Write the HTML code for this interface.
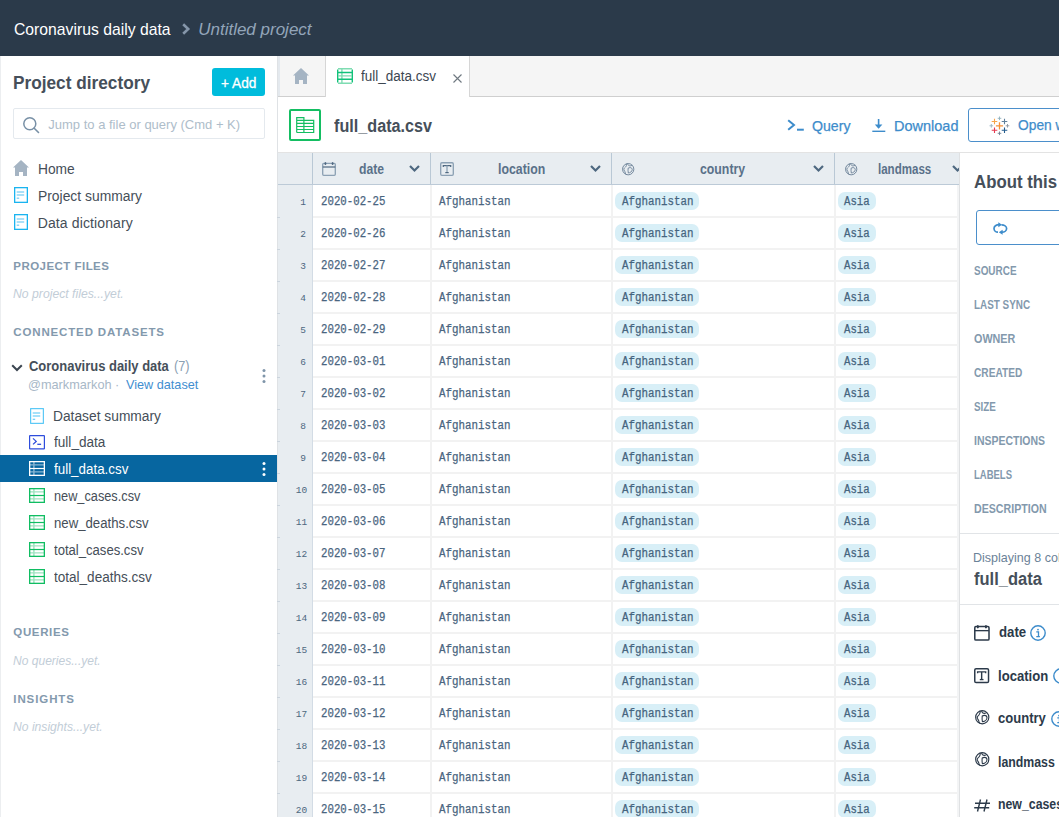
<!DOCTYPE html>
<html><head><meta charset="utf-8">
<style>
*{box-sizing:border-box;margin:0;padding:0}
html,body{width:1059px;height:817px;overflow:hidden;background:#fff;font-family:"Liberation Sans",sans-serif;color:#3f4a55}
.a{position:absolute;white-space:nowrap}
svg.a{overflow:visible}
</style></head><body>
<div class="a" style="left:0;top:0;width:1059px;height:56px;background:#2b3a4a"></div>
<div class="a" style="left:13.6px;top:20px;font-size:17px;color:#fff;transform:scaleX(0.9252);transform-origin:0 0">Coronavirus daily data</div>
<svg class="a" style="left:181px;top:23px" width="10" height="12" viewBox="0 0 10 12"><path d="M2.2 1.2 L7.2 6 L2.2 10.8" fill="none" stroke="#8596aa" stroke-width="2.6"/></svg>
<div class="a" style="left:198.2px;top:20px;font-size:17px;font-style:italic;color:#93a5b9">Untitled project</div>
<div class="a" style="left:0;top:56px;width:278px;height:761px;background:#fff;border-right:1px solid #dfe2e5;border-left:1px solid #eceef0"></div>
<div class="a" style="left:12.6px;top:73px;font-size:18px;font-weight:bold;color:#464f5a;transform:scaleX(0.9575);transform-origin:0 0">Project directory</div>
<div class="a" style="left:212px;top:68px;width:53px;height:28px;background:#00bcdc;border-radius:3px"></div>
<div class="a" style="left:220.9px;top:75px;font-size:14px;color:#fff;-webkit-text-stroke:0.3px currentColor;transform:scaleX(0.9782);transform-origin:0 0">+ Add</div>
<div class="a" style="left:13px;top:108px;width:252px;height:31px;border:1px solid #e4e9ee;border-radius:2px"></div>
<svg class="a" style="left:22px;top:116px" width="18" height="18" viewBox="0 0 18 18"><circle cx="7.8" cy="7.8" r="6" fill="none" stroke="#7890a6" stroke-width="1.5"/><path d="M12.2 12.2 L16.5 16.5" stroke="#7890a6" stroke-width="1.6" stroke-linecap="round"/></svg>
<div class="a" style="left:48.3px;top:117px;font-size:13px;color:#aebdca">Jump to a file or query (Cmd + K)</div>
<svg class="a" style="left:13px;top:160px" width="16" height="16" viewBox="0 0 16 16"><path d="M8 0 L16 7.5 L14 7.5 L14 16 L10 16 L10 12 L6 12 L6 16 L2 16 L2 7.5 L0 7.5 Z" fill="#a5b4c3"/></svg>
<div class="a" style="left:37.7px;top:161px;font-size:14px;color:#454e58;transform:scaleX(0.9847);transform-origin:0 0">Home</div>
<svg class="a" style="left:14px;top:187px" width="14" height="16" viewBox="0 0 14 16"><rect x="0.65" y="0.65" width="12.7" height="14.7" fill="none" stroke="#1ab4f0" stroke-width="1.3"/><path d="M2.7 5h7.5M2.7 8h7.5M2.7 11.2h2.5" stroke="#8ed6f6" stroke-width="1.5"/></svg>
<div class="a" style="left:37.7px;top:188px;font-size:14px;color:#454e58;transform:scaleX(0.9902);transform-origin:0 0">Project summary</div>
<svg class="a" style="left:14px;top:214px" width="14" height="16" viewBox="0 0 14 16"><rect x="0.65" y="0.65" width="12.7" height="14.7" fill="none" stroke="#1ab4f0" stroke-width="1.3"/><path d="M2.7 5h7.5M2.7 8h7.5M2.7 11.2h2.5" stroke="#8ed6f6" stroke-width="1.5"/></svg>
<div class="a" style="left:37.7px;top:215px;font-size:14px;color:#454e58;letter-spacing:0.12px">Data dictionary</div>
<div class="a" style="left:13.3px;top:260px;font-size:11.5px;font-weight:bold;color:#8399ad;letter-spacing:0.46px">PROJECT FILES</div>
<div class="a" style="left:13.3px;top:286px;font-size:13.5px;font-style:italic;color:#c2cdd7;transform:scaleX(0.9050);transform-origin:0 0">No project files...yet.</div>
<div class="a" style="left:13.3px;top:326px;font-size:11.5px;font-weight:bold;color:#8399ad;letter-spacing:0.85px">CONNECTED DATASETS</div>
<svg class="a" style="left:11px;top:364px" width="12" height="8" viewBox="0 0 12 8"><path d="M1.2 1.2 L6 6 L10.8 1.2" fill="none" stroke="#3c4651" stroke-width="2"/></svg>
<div class="a" style="left:29.2px;top:358px;font-size:14px;font-weight:bold;color:#464f5a;transform:scaleX(0.9263);transform-origin:0 0">Coronavirus daily data</div>
<div class="a" style="left:173.5px;top:358px;font-size:14px;color:#8aa0b3;transform:scaleX(0.9120);transform-origin:0 0">(7)</div>
<div class="a" style="left:28.2px;top:377px;font-size:13px;color:#a8b8c7;transform:scaleX(0.9775);transform-origin:0 0">@markmarkoh ·</div>
<div class="a" style="left:125.6px;top:377px;font-size:13px;color:#3f8ed0;transform:scaleX(0.9747);transform-origin:0 0">View dataset</div>
<svg class="a" style="left:261px;top:368px" width="6" height="16" viewBox="0 0 6 16"><circle cx="3" cy="2.5" r="1.5" fill="#7f95a9"/><circle cx="3" cy="8" r="1.5" fill="#7f95a9"/><circle cx="3" cy="13.5" r="1.5" fill="#7f95a9"/></svg>
<svg class="a" style="left:30px;top:407.5px" width="14" height="16" viewBox="0 0 14 16"><rect x="0.65" y="0.65" width="12.7" height="14.7" fill="none" stroke="#4cc4f5" stroke-width="1.1"/><path d="M2.7 5h7.5M2.7 8h7.5M2.7 11.2h2.5" stroke="#4cc4f5" stroke-width="1.1"/></svg>
<div class="a" style="left:53.4px;top:408px;font-size:14px;color:#454e58;transform:scaleX(0.9844);transform-origin:0 0">Dataset summary</div>
<svg class="a" style="left:29px;top:434.5px" width="16" height="14.5" viewBox="0 0 16 14.5"><rect x="0.6" y="0.6" width="14.8" height="13.3" rx="0.5" fill="none" stroke="#2e4ddc" stroke-width="1.2"/><path d="M4 3.4 L7.2 6.4 L4 9.4" fill="none" stroke="#2e4ddc" stroke-width="1.3"/><path d="M8.3 9.3h3.8" stroke="#2e4ddc" stroke-width="1.3"/></svg>
<div class="a" style="left:54.4px;top:434px;font-size:14px;color:#454e58;transform:scaleX(0.9709);transform-origin:0 0">full_data</div>
<div class="a" style="left:0;top:455px;width:277px;height:27px;background:#0766a0"></div>
<svg class="a" style="left:29px;top:461px" width="16" height="15" viewBox="0 0 16 15"><path d="M1 3.9h14M1 10.9h14M4.9 1v13" stroke="#8ab6d2" stroke-width="1.4"/><rect x="0.65" y="0.65" width="14.7" height="13.7" fill="none" stroke="#ffffff" stroke-width="1.3"/><path d="M1 7.5h14" stroke="#ffffff" stroke-width="1.2"/></svg>
<div class="a" style="left:54.4px;top:461px;font-size:14px;color:#fff;transform:scaleX(0.9560);transform-origin:0 0">full_data.csv</div>
<svg class="a" style="left:261px;top:461px" width="6" height="16" viewBox="0 0 6 16"><circle cx="3" cy="2.5" r="1.5" fill="#fff"/><circle cx="3" cy="8" r="1.5" fill="#fff"/><circle cx="3" cy="13.5" r="1.5" fill="#fff"/></svg>
<svg class="a" style="left:29px;top:488.3px" width="16" height="15" viewBox="0 0 16 15"><path d="M1 3.9h14M1 10.9h14M4.9 1v13" stroke="#9fe3c0" stroke-width="1.4"/><rect x="0.65" y="0.65" width="14.7" height="13.7" fill="none" stroke="#10bd62" stroke-width="1.3"/><path d="M1 7.5h14" stroke="#10bd62" stroke-width="1.2"/></svg>
<div class="a" style="left:54.4px;top:488px;font-size:14px;color:#454e58;transform:scaleX(0.9101);transform-origin:0 0">new_cases.csv</div>
<svg class="a" style="left:29px;top:515.2px" width="16" height="15" viewBox="0 0 16 15"><path d="M1 3.9h14M1 10.9h14M4.9 1v13" stroke="#9fe3c0" stroke-width="1.4"/><rect x="0.65" y="0.65" width="14.7" height="13.7" fill="none" stroke="#10bd62" stroke-width="1.3"/><path d="M1 7.5h14" stroke="#10bd62" stroke-width="1.2"/></svg>
<div class="a" style="left:54.4px;top:515px;font-size:14px;color:#454e58;transform:scaleX(0.9423);transform-origin:0 0">new_deaths.csv</div>
<svg class="a" style="left:29px;top:542px" width="16" height="15" viewBox="0 0 16 15"><path d="M1 3.9h14M1 10.9h14M4.9 1v13" stroke="#9fe3c0" stroke-width="1.4"/><rect x="0.65" y="0.65" width="14.7" height="13.7" fill="none" stroke="#10bd62" stroke-width="1.3"/><path d="M1 7.5h14" stroke="#10bd62" stroke-width="1.2"/></svg>
<div class="a" style="left:54.4px;top:542px;font-size:14px;color:#454e58;transform:scaleX(0.9351);transform-origin:0 0">total_cases.csv</div>
<svg class="a" style="left:29px;top:569px" width="16" height="15" viewBox="0 0 16 15"><path d="M1 3.9h14M1 10.9h14M4.9 1v13" stroke="#9fe3c0" stroke-width="1.4"/><rect x="0.65" y="0.65" width="14.7" height="13.7" fill="none" stroke="#10bd62" stroke-width="1.3"/><path d="M1 7.5h14" stroke="#10bd62" stroke-width="1.2"/></svg>
<div class="a" style="left:54.4px;top:569px;font-size:14px;color:#454e58;transform:scaleX(0.9667);transform-origin:0 0">total_deaths.csv</div>
<div class="a" style="left:13.3px;top:626px;font-size:11.5px;font-weight:bold;color:#8399ad;letter-spacing:0.65px">QUERIES</div>
<div class="a" style="left:13.3px;top:653px;font-size:13.5px;font-style:italic;color:#c2cdd7;transform:scaleX(0.8919);transform-origin:0 0">No queries...yet.</div>
<div class="a" style="left:13.3px;top:693px;font-size:11.5px;font-weight:bold;color:#8399ad;letter-spacing:0.91px">INSIGHTS</div>
<div class="a" style="left:13.3px;top:719px;font-size:13.5px;font-style:italic;color:#c2cdd7;transform:scaleX(0.8986);transform-origin:0 0">No insights...yet.</div>
<div class="a" style="left:278px;top:56px;width:781px;height:41px;background:#f5f5f5;border-bottom:1px solid #cfcfcf"></div>
<div class="a" style="left:278px;top:56px;width:2px;height:40px;background:#e4e9ee"></div>
<div class="a" style="left:325px;top:56px;width:145px;height:41px;background:#fff;border-left:1px solid #d6d6d6;border-right:1px solid #d6d6d6"></div>
<svg class="a" style="left:293px;top:68px" width="16" height="16" viewBox="0 0 16 16"><path d="M8 0 L16 7.5 L14 7.5 L14 16 L10 16 L10 12 L6 12 L6 16 L2 16 L2 7.5 L0 7.5 Z" fill="#a5b4c3"/></svg>
<svg class="a" style="left:337px;top:68px" width="16" height="16" viewBox="0 0 16 16"><path d="M0.7 1.5v13M15.3 1.5v13" stroke="#12c27b" stroke-width="1.4"/><path d="M1 0.8h14M1 15.2h14M1 7.9h14M4.9 1v14" stroke="#7fdcb2" stroke-width="1.4"/><path d="M1 4.5h14M1 11.3h14" stroke="#12c27b" stroke-width="1.4"/></svg>
<div class="a" style="left:361.0px;top:68px;font-size:14px;color:#3c4651;transform:scaleX(0.9638);transform-origin:0 0">full_data.csv</div>
<svg class="a" style="left:453px;top:74px" width="9" height="9" viewBox="0 0 9 9"><path d="M0.5 0.5L8.5 8.5M8.5 0.5L0.5 8.5" stroke="#6f7880" stroke-width="1.1"/></svg>
<div class="a" style="left:289px;top:109px;width:32px;height:32px;border:2px solid #14be62;border-radius:2px"></div>
<svg class="a" style="left:296px;top:117px" width="19" height="17" viewBox="0 0 19 17"><path d="M0.7 15.5V0.6H7.9V3.4M0.7 3.4H17.7V15.5H0.7M0.7 6.4H17.7M0.7 9.5H17.7M0.7 12.5H17.7M7.9 3.4V15.5" fill="none" stroke="#14be62" stroke-width="1.2"/></svg>
<div class="a" style="left:333.5px;top:116px;font-size:18px;font-weight:bold;color:#464f5a;transform:scaleX(0.8988);transform-origin:0 0">full_data.csv</div>
<svg class="a" style="left:787px;top:119px" width="18" height="13" viewBox="0 0 18 13"><path d="M1.2 1.2L7 6L1.2 10.8" fill="none" stroke="#3d8ccb" stroke-width="2"/><path d="M10 10.7h6.8" stroke="#3d8ccb" stroke-width="2"/></svg>
<div class="a" style="left:812.3px;top:117px;font-size:15px;color:#3d8ccb;-webkit-text-stroke:0.25px currentColor;transform:scaleX(0.9432);transform-origin:0 0">Query</div>
<svg class="a" style="left:871.5px;top:119px" width="14" height="14" viewBox="0 0 14 14"><path d="M6.6 0v8.5" stroke="#3d8ccb" stroke-width="1.6"/><path d="M2.8 5.5L6.6 9.8L10.4 5.5Z" fill="#3d8ccb"/><path d="M0.3 12.3h13" stroke="#3d8ccb" stroke-width="1.4"/></svg>
<div class="a" style="left:893.6px;top:117px;font-size:15px;color:#3d8ccb;-webkit-text-stroke:0.25px currentColor;transform:scaleX(0.9669);transform-origin:0 0">Download</div>
<div class="a" style="left:968px;top:108px;width:120px;height:34px;border:1.5px solid #4b8fcb;border-radius:3px;background:#fff"></div>
<svg class="a" style="left:988px;top:115px" width="22" height="22" viewBox="988 115 22 22"><path d="M995.9 125.8h7.2M999.5 122.2v7.2" stroke="#f5913a" stroke-width="1.3"/><path d="M991.7 121.5h5.6M994.5 118.7v5.6" stroke="#f7a54a" stroke-width="1.1"/><path d="M1001.7 121.5h5.6M1004.5 118.7v5.6" stroke="#61809c" stroke-width="1.1"/><path d="M991.7 130.3h5.6M994.5 127.50000000000001v5.6" stroke="#e53b50" stroke-width="1.1"/><path d="M1001.7 130.3h5.6M1004.5 127.50000000000001v5.6" stroke="#245d8e" stroke-width="1.1"/><path d="M997.7 118.3h3.6M999.5 116.5v3.6" stroke="#8fb0bb" stroke-width="0.9"/><path d="M997.7 133.3h3.6M999.5 131.5v3.6" stroke="#6d7f91" stroke-width="0.9"/><path d="M989.5 125.8h3.6M991.3 124.0v3.6" stroke="#9ab3c2" stroke-width="0.9"/><path d="M1005.7 125.8h3.6M1007.5 124.0v3.6" stroke="#8d96a0" stroke-width="0.9"/></svg>
<div class="a" style="left:1017.6px;top:116px;font-size:15px;color:#3d8ccb;-webkit-text-stroke:0.25px currentColor;transform:scaleX(0.9188);transform-origin:0 0">Open with</div>
<div class="a" style="left:278px;top:152px;width:781px;height:1px;background:#e3e3e3"></div>
<div class="a" style="left:278px;top:153px;width:681px;height:32px;background:#e8edf1;border-bottom:1px solid #bccad7"></div>
<div class="a" style="left:278px;top:185px;width:35px;height:632px;background:#e8edf1;border-right:1px solid #d3dce5"></div>
<div class="a" style="left:312px;top:153px;width:1px;height:31px;background:#b9c8d5"></div>
<div class="a" style="left:430px;top:153px;width:1px;height:31px;background:#b9c8d5"></div>
<div class="a" style="left:611px;top:153px;width:1px;height:31px;background:#b9c8d5"></div>
<div class="a" style="left:834px;top:153px;width:1px;height:31px;background:#b9c8d5"></div>
<div class="a" style="left:430px;top:185px;width:2px;height:632px;background:#f2f2f2"></div>
<div class="a" style="left:611px;top:185px;width:2px;height:632px;background:#f2f2f2"></div>
<div class="a" style="left:834px;top:185px;width:2px;height:632px;background:#f2f2f2"></div>
<div class="a" style="left:313px;top:216px;width:646px;height:2px;background:#f2f2f2"></div>
<div class="a" style="left:277px;top:217px;width:3px;height:1px;background:#cbd4dd"></div>
<div class="a" style="left:313px;top:248px;width:646px;height:2px;background:#f2f2f2"></div>
<div class="a" style="left:277px;top:249px;width:3px;height:1px;background:#cbd4dd"></div>
<div class="a" style="left:313px;top:280px;width:646px;height:2px;background:#f2f2f2"></div>
<div class="a" style="left:277px;top:281px;width:3px;height:1px;background:#cbd4dd"></div>
<div class="a" style="left:313px;top:312px;width:646px;height:2px;background:#f2f2f2"></div>
<div class="a" style="left:277px;top:313px;width:3px;height:1px;background:#cbd4dd"></div>
<div class="a" style="left:313px;top:344px;width:646px;height:2px;background:#f2f2f2"></div>
<div class="a" style="left:277px;top:345px;width:3px;height:1px;background:#cbd4dd"></div>
<div class="a" style="left:313px;top:376px;width:646px;height:2px;background:#f2f2f2"></div>
<div class="a" style="left:277px;top:377px;width:3px;height:1px;background:#cbd4dd"></div>
<div class="a" style="left:313px;top:408px;width:646px;height:2px;background:#f2f2f2"></div>
<div class="a" style="left:277px;top:409px;width:3px;height:1px;background:#cbd4dd"></div>
<div class="a" style="left:313px;top:440px;width:646px;height:2px;background:#f2f2f2"></div>
<div class="a" style="left:277px;top:441px;width:3px;height:1px;background:#cbd4dd"></div>
<div class="a" style="left:313px;top:472px;width:646px;height:2px;background:#f2f2f2"></div>
<div class="a" style="left:277px;top:473px;width:3px;height:1px;background:#cbd4dd"></div>
<div class="a" style="left:313px;top:504px;width:646px;height:2px;background:#f2f2f2"></div>
<div class="a" style="left:277px;top:505px;width:3px;height:1px;background:#cbd4dd"></div>
<div class="a" style="left:313px;top:536px;width:646px;height:2px;background:#f2f2f2"></div>
<div class="a" style="left:277px;top:537px;width:3px;height:1px;background:#cbd4dd"></div>
<div class="a" style="left:313px;top:568px;width:646px;height:2px;background:#f2f2f2"></div>
<div class="a" style="left:277px;top:569px;width:3px;height:1px;background:#cbd4dd"></div>
<div class="a" style="left:313px;top:600px;width:646px;height:2px;background:#f2f2f2"></div>
<div class="a" style="left:277px;top:601px;width:3px;height:1px;background:#cbd4dd"></div>
<div class="a" style="left:313px;top:632px;width:646px;height:2px;background:#f2f2f2"></div>
<div class="a" style="left:277px;top:633px;width:3px;height:1px;background:#cbd4dd"></div>
<div class="a" style="left:313px;top:664px;width:646px;height:2px;background:#f2f2f2"></div>
<div class="a" style="left:277px;top:665px;width:3px;height:1px;background:#cbd4dd"></div>
<div class="a" style="left:313px;top:696px;width:646px;height:2px;background:#f2f2f2"></div>
<div class="a" style="left:277px;top:697px;width:3px;height:1px;background:#cbd4dd"></div>
<div class="a" style="left:313px;top:728px;width:646px;height:2px;background:#f2f2f2"></div>
<div class="a" style="left:277px;top:729px;width:3px;height:1px;background:#cbd4dd"></div>
<div class="a" style="left:313px;top:760px;width:646px;height:2px;background:#f2f2f2"></div>
<div class="a" style="left:277px;top:761px;width:3px;height:1px;background:#cbd4dd"></div>
<div class="a" style="left:313px;top:792px;width:646px;height:2px;background:#f2f2f2"></div>
<div class="a" style="left:277px;top:793px;width:3px;height:1px;background:#cbd4dd"></div>
<div class="a" style="left:313px;top:824px;width:646px;height:2px;background:#f2f2f2"></div>
<div class="a" style="left:277px;top:825px;width:3px;height:1px;background:#cbd4dd"></div>
<svg class="a" style="left:322px;top:162.2px" width="14" height="14" viewBox="0 0 14 14"><rect x="0.7" y="1.4" width="12.6" height="11.9" rx="1" fill="none" stroke="#8ca1b4" stroke-width="1.35"/><path d="M0.8 5.0h12.4" stroke="#4f6880" stroke-width="1.2"/><ellipse cx="3.4" cy="1.6" rx="0.95" ry="1.5" fill="#4f6880"/><ellipse cx="10.6" cy="1.6" rx="0.95" ry="1.5" fill="#4f6880"/></svg>
<div class="a" style="left:358.8px;top:161px;font-size:14px;font-weight:bold;color:#5a7189;transform:scaleX(0.8690);transform-origin:0 0">date</div>
<svg class="a" style="left:408.5px;top:164.5px" width="11" height="7" viewBox="0 0 11 7"><path d="M1 1L5.5 5.5L10 1" fill="none" stroke="#4e6880" stroke-width="2.2"/></svg>
<svg class="a" style="left:440px;top:162px" width="14" height="14" viewBox="0 0 14 14"><rect x="0.7" y="0.7" width="12.6" height="12.6" rx="1.2" fill="none" stroke="#8ca1b4" stroke-width="1.35"/><path d="M3.3 4.9V3.6H10.7V4.9" fill="none" stroke="#4f6880" stroke-width="1.2"/><path d="M7 3.6V10.4" stroke="#8ca1b4" stroke-width="1.3"/><path d="M5.3 10.6H8.7" stroke="#4f6880" stroke-width="1.2"/></svg>
<div class="a" style="left:497.7px;top:161px;font-size:14px;font-weight:bold;color:#5a7189;transform:scaleX(0.8792);transform-origin:0 0">location</div>
<svg class="a" style="left:589.5px;top:164.5px" width="11" height="7" viewBox="0 0 11 7"><path d="M1 1L5.5 5.5L10 1" fill="none" stroke="#4e6880" stroke-width="2.2"/></svg>
<svg class="a" style="left:622px;top:163px" width="12.4" height="12.4" viewBox="0 0 14.5 14.5"><circle cx="7.25" cy="7.25" r="6.6" fill="none" stroke="#5f778e" stroke-width="1.0"/><path d="M5.2 1.0C5.4 2.6 5.2 3.6 4.0 4.8C2.6 6 1.9 7 2.3 8.2C2.8 9.4 3.8 10 3.9 11.6C3.9 12.4 4.4 13 4.8 13.3M6.6 0.8C7 2.6 8 3.4 9.5 3.4C10.5 3.4 11.2 3.1 11.9 2.4M7.2 6C7 8 7 10 7.4 11.7C9.5 11.6 11.8 10 12 7.8C12 6.4 11 5.4 9.6 5.4C8.6 5.4 7.8 5.6 7.2 6Z" fill="none" stroke="#5f778e" stroke-width="0.95" stroke-linejoin="round"/></svg>
<div class="a" style="left:700.2px;top:161px;font-size:14px;font-weight:bold;color:#5a7189;transform:scaleX(0.8787);transform-origin:0 0">country</div>
<svg class="a" style="left:812.5px;top:164.5px" width="11" height="7" viewBox="0 0 11 7"><path d="M1 1L5.5 5.5L10 1" fill="none" stroke="#4e6880" stroke-width="2.2"/></svg>
<svg class="a" style="left:844.8px;top:163px" width="12.4" height="12.4" viewBox="0 0 14.5 14.5"><circle cx="7.25" cy="7.25" r="6.6" fill="none" stroke="#5f778e" stroke-width="1.0"/><path d="M5.2 1.0C5.4 2.6 5.2 3.6 4.0 4.8C2.6 6 1.9 7 2.3 8.2C2.8 9.4 3.8 10 3.9 11.6C3.9 12.4 4.4 13 4.8 13.3M6.6 0.8C7 2.6 8 3.4 9.5 3.4C10.5 3.4 11.2 3.1 11.9 2.4M7.2 6C7 8 7 10 7.4 11.7C9.5 11.6 11.8 10 12 7.8C12 6.4 11 5.4 9.6 5.4C8.6 5.4 7.8 5.6 7.2 6Z" fill="none" stroke="#5f778e" stroke-width="0.95" stroke-linejoin="round"/></svg>
<div class="a" style="left:877.6px;top:161px;font-size:14px;font-weight:bold;color:#5a7189;transform:scaleX(0.8241);transform-origin:0 0">landmass</div>
<svg class="a" style="left:951.5px;top:164.5px" width="11" height="7" viewBox="0 0 11 7"><path d="M1 1L5.5 5.5L10 1" fill="none" stroke="#4e6880" stroke-width="2.2"/></svg>
<div class="a" style="left:300.3px;top:197px;font-family:'Liberation Mono',monospace;font-size:9.5px;color:#4d6780">1</div>
<div class="a" style="left:321.3px;top:195px;font-family:'Liberation Mono',monospace;font-size:12px;color:#4a6580;-webkit-text-stroke:0.25px currentColor;transform:scaleX(0.8940);transform-origin:0 0">2020-02-25</div>
<div class="a" style="left:439.2px;top:195px;font-family:'Liberation Mono',monospace;font-size:12px;color:#4a6580;-webkit-text-stroke:0.25px currentColor;transform:scaleX(0.9011);transform-origin:0 0">Afghanistan</div>
<div class="a" style="left:615px;top:192px;width:84px;height:18px;border-radius:7px;background:#d8eff7"></div>
<div class="a" style="left:622.2px;top:195px;font-family:'Liberation Mono',monospace;font-size:12px;color:#45647e;-webkit-text-stroke:0.25px currentColor;transform:scaleX(0.9011);transform-origin:0 0">Afghanistan</div>
<div class="a" style="left:838px;top:192px;width:38px;height:18px;border-radius:7px;background:#d8eff7"></div>
<div class="a" style="left:844.3px;top:195px;font-family:'Liberation Mono',monospace;font-size:12px;color:#45647e;-webkit-text-stroke:0.25px currentColor;transform:scaleX(0.8915);transform-origin:0 0">Asia</div>
<div class="a" style="left:300.3px;top:229px;font-family:'Liberation Mono',monospace;font-size:9.5px;color:#4d6780">2</div>
<div class="a" style="left:321.3px;top:227px;font-family:'Liberation Mono',monospace;font-size:12px;color:#4a6580;-webkit-text-stroke:0.25px currentColor;transform:scaleX(0.8940);transform-origin:0 0">2020-02-26</div>
<div class="a" style="left:439.2px;top:227px;font-family:'Liberation Mono',monospace;font-size:12px;color:#4a6580;-webkit-text-stroke:0.25px currentColor;transform:scaleX(0.9011);transform-origin:0 0">Afghanistan</div>
<div class="a" style="left:615px;top:224px;width:84px;height:18px;border-radius:7px;background:#d8eff7"></div>
<div class="a" style="left:622.2px;top:227px;font-family:'Liberation Mono',monospace;font-size:12px;color:#45647e;-webkit-text-stroke:0.25px currentColor;transform:scaleX(0.9011);transform-origin:0 0">Afghanistan</div>
<div class="a" style="left:838px;top:224px;width:38px;height:18px;border-radius:7px;background:#d8eff7"></div>
<div class="a" style="left:844.3px;top:227px;font-family:'Liberation Mono',monospace;font-size:12px;color:#45647e;-webkit-text-stroke:0.25px currentColor;transform:scaleX(0.8915);transform-origin:0 0">Asia</div>
<div class="a" style="left:300.3px;top:261px;font-family:'Liberation Mono',monospace;font-size:9.5px;color:#4d6780">3</div>
<div class="a" style="left:321.3px;top:259px;font-family:'Liberation Mono',monospace;font-size:12px;color:#4a6580;-webkit-text-stroke:0.25px currentColor;transform:scaleX(0.8940);transform-origin:0 0">2020-02-27</div>
<div class="a" style="left:439.2px;top:259px;font-family:'Liberation Mono',monospace;font-size:12px;color:#4a6580;-webkit-text-stroke:0.25px currentColor;transform:scaleX(0.9011);transform-origin:0 0">Afghanistan</div>
<div class="a" style="left:615px;top:256px;width:84px;height:18px;border-radius:7px;background:#d8eff7"></div>
<div class="a" style="left:622.2px;top:259px;font-family:'Liberation Mono',monospace;font-size:12px;color:#45647e;-webkit-text-stroke:0.25px currentColor;transform:scaleX(0.9011);transform-origin:0 0">Afghanistan</div>
<div class="a" style="left:838px;top:256px;width:38px;height:18px;border-radius:7px;background:#d8eff7"></div>
<div class="a" style="left:844.3px;top:259px;font-family:'Liberation Mono',monospace;font-size:12px;color:#45647e;-webkit-text-stroke:0.25px currentColor;transform:scaleX(0.8915);transform-origin:0 0">Asia</div>
<div class="a" style="left:300.3px;top:293px;font-family:'Liberation Mono',monospace;font-size:9.5px;color:#4d6780">4</div>
<div class="a" style="left:321.3px;top:291px;font-family:'Liberation Mono',monospace;font-size:12px;color:#4a6580;-webkit-text-stroke:0.25px currentColor;transform:scaleX(0.8940);transform-origin:0 0">2020-02-28</div>
<div class="a" style="left:439.2px;top:291px;font-family:'Liberation Mono',monospace;font-size:12px;color:#4a6580;-webkit-text-stroke:0.25px currentColor;transform:scaleX(0.9011);transform-origin:0 0">Afghanistan</div>
<div class="a" style="left:615px;top:288px;width:84px;height:18px;border-radius:7px;background:#d8eff7"></div>
<div class="a" style="left:622.2px;top:291px;font-family:'Liberation Mono',monospace;font-size:12px;color:#45647e;-webkit-text-stroke:0.25px currentColor;transform:scaleX(0.9011);transform-origin:0 0">Afghanistan</div>
<div class="a" style="left:838px;top:288px;width:38px;height:18px;border-radius:7px;background:#d8eff7"></div>
<div class="a" style="left:844.3px;top:291px;font-family:'Liberation Mono',monospace;font-size:12px;color:#45647e;-webkit-text-stroke:0.25px currentColor;transform:scaleX(0.8915);transform-origin:0 0">Asia</div>
<div class="a" style="left:300.3px;top:325px;font-family:'Liberation Mono',monospace;font-size:9.5px;color:#4d6780">5</div>
<div class="a" style="left:321.3px;top:323px;font-family:'Liberation Mono',monospace;font-size:12px;color:#4a6580;-webkit-text-stroke:0.25px currentColor;transform:scaleX(0.8940);transform-origin:0 0">2020-02-29</div>
<div class="a" style="left:439.2px;top:323px;font-family:'Liberation Mono',monospace;font-size:12px;color:#4a6580;-webkit-text-stroke:0.25px currentColor;transform:scaleX(0.9011);transform-origin:0 0">Afghanistan</div>
<div class="a" style="left:615px;top:320px;width:84px;height:18px;border-radius:7px;background:#d8eff7"></div>
<div class="a" style="left:622.2px;top:323px;font-family:'Liberation Mono',monospace;font-size:12px;color:#45647e;-webkit-text-stroke:0.25px currentColor;transform:scaleX(0.9011);transform-origin:0 0">Afghanistan</div>
<div class="a" style="left:838px;top:320px;width:38px;height:18px;border-radius:7px;background:#d8eff7"></div>
<div class="a" style="left:844.3px;top:323px;font-family:'Liberation Mono',monospace;font-size:12px;color:#45647e;-webkit-text-stroke:0.25px currentColor;transform:scaleX(0.8915);transform-origin:0 0">Asia</div>
<div class="a" style="left:300.3px;top:357px;font-family:'Liberation Mono',monospace;font-size:9.5px;color:#4d6780">6</div>
<div class="a" style="left:321.3px;top:355px;font-family:'Liberation Mono',monospace;font-size:12px;color:#4a6580;-webkit-text-stroke:0.25px currentColor;transform:scaleX(0.8940);transform-origin:0 0">2020-03-01</div>
<div class="a" style="left:439.2px;top:355px;font-family:'Liberation Mono',monospace;font-size:12px;color:#4a6580;-webkit-text-stroke:0.25px currentColor;transform:scaleX(0.9011);transform-origin:0 0">Afghanistan</div>
<div class="a" style="left:615px;top:352px;width:84px;height:18px;border-radius:7px;background:#d8eff7"></div>
<div class="a" style="left:622.2px;top:355px;font-family:'Liberation Mono',monospace;font-size:12px;color:#45647e;-webkit-text-stroke:0.25px currentColor;transform:scaleX(0.9011);transform-origin:0 0">Afghanistan</div>
<div class="a" style="left:838px;top:352px;width:38px;height:18px;border-radius:7px;background:#d8eff7"></div>
<div class="a" style="left:844.3px;top:355px;font-family:'Liberation Mono',monospace;font-size:12px;color:#45647e;-webkit-text-stroke:0.25px currentColor;transform:scaleX(0.8915);transform-origin:0 0">Asia</div>
<div class="a" style="left:300.3px;top:389px;font-family:'Liberation Mono',monospace;font-size:9.5px;color:#4d6780">7</div>
<div class="a" style="left:321.3px;top:387px;font-family:'Liberation Mono',monospace;font-size:12px;color:#4a6580;-webkit-text-stroke:0.25px currentColor;transform:scaleX(0.8940);transform-origin:0 0">2020-03-02</div>
<div class="a" style="left:439.2px;top:387px;font-family:'Liberation Mono',monospace;font-size:12px;color:#4a6580;-webkit-text-stroke:0.25px currentColor;transform:scaleX(0.9011);transform-origin:0 0">Afghanistan</div>
<div class="a" style="left:615px;top:384px;width:84px;height:18px;border-radius:7px;background:#d8eff7"></div>
<div class="a" style="left:622.2px;top:387px;font-family:'Liberation Mono',monospace;font-size:12px;color:#45647e;-webkit-text-stroke:0.25px currentColor;transform:scaleX(0.9011);transform-origin:0 0">Afghanistan</div>
<div class="a" style="left:838px;top:384px;width:38px;height:18px;border-radius:7px;background:#d8eff7"></div>
<div class="a" style="left:844.3px;top:387px;font-family:'Liberation Mono',monospace;font-size:12px;color:#45647e;-webkit-text-stroke:0.25px currentColor;transform:scaleX(0.8915);transform-origin:0 0">Asia</div>
<div class="a" style="left:300.3px;top:421px;font-family:'Liberation Mono',monospace;font-size:9.5px;color:#4d6780">8</div>
<div class="a" style="left:321.3px;top:419px;font-family:'Liberation Mono',monospace;font-size:12px;color:#4a6580;-webkit-text-stroke:0.25px currentColor;transform:scaleX(0.8940);transform-origin:0 0">2020-03-03</div>
<div class="a" style="left:439.2px;top:419px;font-family:'Liberation Mono',monospace;font-size:12px;color:#4a6580;-webkit-text-stroke:0.25px currentColor;transform:scaleX(0.9011);transform-origin:0 0">Afghanistan</div>
<div class="a" style="left:615px;top:416px;width:84px;height:18px;border-radius:7px;background:#d8eff7"></div>
<div class="a" style="left:622.2px;top:419px;font-family:'Liberation Mono',monospace;font-size:12px;color:#45647e;-webkit-text-stroke:0.25px currentColor;transform:scaleX(0.9011);transform-origin:0 0">Afghanistan</div>
<div class="a" style="left:838px;top:416px;width:38px;height:18px;border-radius:7px;background:#d8eff7"></div>
<div class="a" style="left:844.3px;top:419px;font-family:'Liberation Mono',monospace;font-size:12px;color:#45647e;-webkit-text-stroke:0.25px currentColor;transform:scaleX(0.8915);transform-origin:0 0">Asia</div>
<div class="a" style="left:300.3px;top:453px;font-family:'Liberation Mono',monospace;font-size:9.5px;color:#4d6780">9</div>
<div class="a" style="left:321.3px;top:451px;font-family:'Liberation Mono',monospace;font-size:12px;color:#4a6580;-webkit-text-stroke:0.25px currentColor;transform:scaleX(0.8940);transform-origin:0 0">2020-03-04</div>
<div class="a" style="left:439.2px;top:451px;font-family:'Liberation Mono',monospace;font-size:12px;color:#4a6580;-webkit-text-stroke:0.25px currentColor;transform:scaleX(0.9011);transform-origin:0 0">Afghanistan</div>
<div class="a" style="left:615px;top:448px;width:84px;height:18px;border-radius:7px;background:#d8eff7"></div>
<div class="a" style="left:622.2px;top:451px;font-family:'Liberation Mono',monospace;font-size:12px;color:#45647e;-webkit-text-stroke:0.25px currentColor;transform:scaleX(0.9011);transform-origin:0 0">Afghanistan</div>
<div class="a" style="left:838px;top:448px;width:38px;height:18px;border-radius:7px;background:#d8eff7"></div>
<div class="a" style="left:844.3px;top:451px;font-family:'Liberation Mono',monospace;font-size:12px;color:#45647e;-webkit-text-stroke:0.25px currentColor;transform:scaleX(0.8915);transform-origin:0 0">Asia</div>
<div class="a" style="left:295.7px;top:485px;font-family:'Liberation Mono',monospace;font-size:9.5px;color:#4d6780">10</div>
<div class="a" style="left:321.3px;top:483px;font-family:'Liberation Mono',monospace;font-size:12px;color:#4a6580;-webkit-text-stroke:0.25px currentColor;transform:scaleX(0.8940);transform-origin:0 0">2020-03-05</div>
<div class="a" style="left:439.2px;top:483px;font-family:'Liberation Mono',monospace;font-size:12px;color:#4a6580;-webkit-text-stroke:0.25px currentColor;transform:scaleX(0.9011);transform-origin:0 0">Afghanistan</div>
<div class="a" style="left:615px;top:480px;width:84px;height:18px;border-radius:7px;background:#d8eff7"></div>
<div class="a" style="left:622.2px;top:483px;font-family:'Liberation Mono',monospace;font-size:12px;color:#45647e;-webkit-text-stroke:0.25px currentColor;transform:scaleX(0.9011);transform-origin:0 0">Afghanistan</div>
<div class="a" style="left:838px;top:480px;width:38px;height:18px;border-radius:7px;background:#d8eff7"></div>
<div class="a" style="left:844.3px;top:483px;font-family:'Liberation Mono',monospace;font-size:12px;color:#45647e;-webkit-text-stroke:0.25px currentColor;transform:scaleX(0.8915);transform-origin:0 0">Asia</div>
<div class="a" style="left:295.7px;top:517px;font-family:'Liberation Mono',monospace;font-size:9.5px;color:#4d6780">11</div>
<div class="a" style="left:321.3px;top:515px;font-family:'Liberation Mono',monospace;font-size:12px;color:#4a6580;-webkit-text-stroke:0.25px currentColor;transform:scaleX(0.8940);transform-origin:0 0">2020-03-06</div>
<div class="a" style="left:439.2px;top:515px;font-family:'Liberation Mono',monospace;font-size:12px;color:#4a6580;-webkit-text-stroke:0.25px currentColor;transform:scaleX(0.9011);transform-origin:0 0">Afghanistan</div>
<div class="a" style="left:615px;top:512px;width:84px;height:18px;border-radius:7px;background:#d8eff7"></div>
<div class="a" style="left:622.2px;top:515px;font-family:'Liberation Mono',monospace;font-size:12px;color:#45647e;-webkit-text-stroke:0.25px currentColor;transform:scaleX(0.9011);transform-origin:0 0">Afghanistan</div>
<div class="a" style="left:838px;top:512px;width:38px;height:18px;border-radius:7px;background:#d8eff7"></div>
<div class="a" style="left:844.3px;top:515px;font-family:'Liberation Mono',monospace;font-size:12px;color:#45647e;-webkit-text-stroke:0.25px currentColor;transform:scaleX(0.8915);transform-origin:0 0">Asia</div>
<div class="a" style="left:295.7px;top:549px;font-family:'Liberation Mono',monospace;font-size:9.5px;color:#4d6780">12</div>
<div class="a" style="left:321.3px;top:547px;font-family:'Liberation Mono',monospace;font-size:12px;color:#4a6580;-webkit-text-stroke:0.25px currentColor;transform:scaleX(0.8940);transform-origin:0 0">2020-03-07</div>
<div class="a" style="left:439.2px;top:547px;font-family:'Liberation Mono',monospace;font-size:12px;color:#4a6580;-webkit-text-stroke:0.25px currentColor;transform:scaleX(0.9011);transform-origin:0 0">Afghanistan</div>
<div class="a" style="left:615px;top:544px;width:84px;height:18px;border-radius:7px;background:#d8eff7"></div>
<div class="a" style="left:622.2px;top:547px;font-family:'Liberation Mono',monospace;font-size:12px;color:#45647e;-webkit-text-stroke:0.25px currentColor;transform:scaleX(0.9011);transform-origin:0 0">Afghanistan</div>
<div class="a" style="left:838px;top:544px;width:38px;height:18px;border-radius:7px;background:#d8eff7"></div>
<div class="a" style="left:844.3px;top:547px;font-family:'Liberation Mono',monospace;font-size:12px;color:#45647e;-webkit-text-stroke:0.25px currentColor;transform:scaleX(0.8915);transform-origin:0 0">Asia</div>
<div class="a" style="left:295.7px;top:581px;font-family:'Liberation Mono',monospace;font-size:9.5px;color:#4d6780">13</div>
<div class="a" style="left:321.3px;top:579px;font-family:'Liberation Mono',monospace;font-size:12px;color:#4a6580;-webkit-text-stroke:0.25px currentColor;transform:scaleX(0.8940);transform-origin:0 0">2020-03-08</div>
<div class="a" style="left:439.2px;top:579px;font-family:'Liberation Mono',monospace;font-size:12px;color:#4a6580;-webkit-text-stroke:0.25px currentColor;transform:scaleX(0.9011);transform-origin:0 0">Afghanistan</div>
<div class="a" style="left:615px;top:576px;width:84px;height:18px;border-radius:7px;background:#d8eff7"></div>
<div class="a" style="left:622.2px;top:579px;font-family:'Liberation Mono',monospace;font-size:12px;color:#45647e;-webkit-text-stroke:0.25px currentColor;transform:scaleX(0.9011);transform-origin:0 0">Afghanistan</div>
<div class="a" style="left:838px;top:576px;width:38px;height:18px;border-radius:7px;background:#d8eff7"></div>
<div class="a" style="left:844.3px;top:579px;font-family:'Liberation Mono',monospace;font-size:12px;color:#45647e;-webkit-text-stroke:0.25px currentColor;transform:scaleX(0.8915);transform-origin:0 0">Asia</div>
<div class="a" style="left:295.7px;top:613px;font-family:'Liberation Mono',monospace;font-size:9.5px;color:#4d6780">14</div>
<div class="a" style="left:321.3px;top:611px;font-family:'Liberation Mono',monospace;font-size:12px;color:#4a6580;-webkit-text-stroke:0.25px currentColor;transform:scaleX(0.8940);transform-origin:0 0">2020-03-09</div>
<div class="a" style="left:439.2px;top:611px;font-family:'Liberation Mono',monospace;font-size:12px;color:#4a6580;-webkit-text-stroke:0.25px currentColor;transform:scaleX(0.9011);transform-origin:0 0">Afghanistan</div>
<div class="a" style="left:615px;top:608px;width:84px;height:18px;border-radius:7px;background:#d8eff7"></div>
<div class="a" style="left:622.2px;top:611px;font-family:'Liberation Mono',monospace;font-size:12px;color:#45647e;-webkit-text-stroke:0.25px currentColor;transform:scaleX(0.9011);transform-origin:0 0">Afghanistan</div>
<div class="a" style="left:838px;top:608px;width:38px;height:18px;border-radius:7px;background:#d8eff7"></div>
<div class="a" style="left:844.3px;top:611px;font-family:'Liberation Mono',monospace;font-size:12px;color:#45647e;-webkit-text-stroke:0.25px currentColor;transform:scaleX(0.8915);transform-origin:0 0">Asia</div>
<div class="a" style="left:295.7px;top:645px;font-family:'Liberation Mono',monospace;font-size:9.5px;color:#4d6780">15</div>
<div class="a" style="left:321.3px;top:643px;font-family:'Liberation Mono',monospace;font-size:12px;color:#4a6580;-webkit-text-stroke:0.25px currentColor;transform:scaleX(0.8940);transform-origin:0 0">2020-03-10</div>
<div class="a" style="left:439.2px;top:643px;font-family:'Liberation Mono',monospace;font-size:12px;color:#4a6580;-webkit-text-stroke:0.25px currentColor;transform:scaleX(0.9011);transform-origin:0 0">Afghanistan</div>
<div class="a" style="left:615px;top:640px;width:84px;height:18px;border-radius:7px;background:#d8eff7"></div>
<div class="a" style="left:622.2px;top:643px;font-family:'Liberation Mono',monospace;font-size:12px;color:#45647e;-webkit-text-stroke:0.25px currentColor;transform:scaleX(0.9011);transform-origin:0 0">Afghanistan</div>
<div class="a" style="left:838px;top:640px;width:38px;height:18px;border-radius:7px;background:#d8eff7"></div>
<div class="a" style="left:844.3px;top:643px;font-family:'Liberation Mono',monospace;font-size:12px;color:#45647e;-webkit-text-stroke:0.25px currentColor;transform:scaleX(0.8915);transform-origin:0 0">Asia</div>
<div class="a" style="left:295.7px;top:677px;font-family:'Liberation Mono',monospace;font-size:9.5px;color:#4d6780">16</div>
<div class="a" style="left:321.3px;top:675px;font-family:'Liberation Mono',monospace;font-size:12px;color:#4a6580;-webkit-text-stroke:0.25px currentColor;transform:scaleX(0.8940);transform-origin:0 0">2020-03-11</div>
<div class="a" style="left:439.2px;top:675px;font-family:'Liberation Mono',monospace;font-size:12px;color:#4a6580;-webkit-text-stroke:0.25px currentColor;transform:scaleX(0.9011);transform-origin:0 0">Afghanistan</div>
<div class="a" style="left:615px;top:672px;width:84px;height:18px;border-radius:7px;background:#d8eff7"></div>
<div class="a" style="left:622.2px;top:675px;font-family:'Liberation Mono',monospace;font-size:12px;color:#45647e;-webkit-text-stroke:0.25px currentColor;transform:scaleX(0.9011);transform-origin:0 0">Afghanistan</div>
<div class="a" style="left:838px;top:672px;width:38px;height:18px;border-radius:7px;background:#d8eff7"></div>
<div class="a" style="left:844.3px;top:675px;font-family:'Liberation Mono',monospace;font-size:12px;color:#45647e;-webkit-text-stroke:0.25px currentColor;transform:scaleX(0.8915);transform-origin:0 0">Asia</div>
<div class="a" style="left:295.7px;top:709px;font-family:'Liberation Mono',monospace;font-size:9.5px;color:#4d6780">17</div>
<div class="a" style="left:321.3px;top:707px;font-family:'Liberation Mono',monospace;font-size:12px;color:#4a6580;-webkit-text-stroke:0.25px currentColor;transform:scaleX(0.8940);transform-origin:0 0">2020-03-12</div>
<div class="a" style="left:439.2px;top:707px;font-family:'Liberation Mono',monospace;font-size:12px;color:#4a6580;-webkit-text-stroke:0.25px currentColor;transform:scaleX(0.9011);transform-origin:0 0">Afghanistan</div>
<div class="a" style="left:615px;top:704px;width:84px;height:18px;border-radius:7px;background:#d8eff7"></div>
<div class="a" style="left:622.2px;top:707px;font-family:'Liberation Mono',monospace;font-size:12px;color:#45647e;-webkit-text-stroke:0.25px currentColor;transform:scaleX(0.9011);transform-origin:0 0">Afghanistan</div>
<div class="a" style="left:838px;top:704px;width:38px;height:18px;border-radius:7px;background:#d8eff7"></div>
<div class="a" style="left:844.3px;top:707px;font-family:'Liberation Mono',monospace;font-size:12px;color:#45647e;-webkit-text-stroke:0.25px currentColor;transform:scaleX(0.8915);transform-origin:0 0">Asia</div>
<div class="a" style="left:295.7px;top:741px;font-family:'Liberation Mono',monospace;font-size:9.5px;color:#4d6780">18</div>
<div class="a" style="left:321.3px;top:739px;font-family:'Liberation Mono',monospace;font-size:12px;color:#4a6580;-webkit-text-stroke:0.25px currentColor;transform:scaleX(0.8940);transform-origin:0 0">2020-03-13</div>
<div class="a" style="left:439.2px;top:739px;font-family:'Liberation Mono',monospace;font-size:12px;color:#4a6580;-webkit-text-stroke:0.25px currentColor;transform:scaleX(0.9011);transform-origin:0 0">Afghanistan</div>
<div class="a" style="left:615px;top:736px;width:84px;height:18px;border-radius:7px;background:#d8eff7"></div>
<div class="a" style="left:622.2px;top:739px;font-family:'Liberation Mono',monospace;font-size:12px;color:#45647e;-webkit-text-stroke:0.25px currentColor;transform:scaleX(0.9011);transform-origin:0 0">Afghanistan</div>
<div class="a" style="left:838px;top:736px;width:38px;height:18px;border-radius:7px;background:#d8eff7"></div>
<div class="a" style="left:844.3px;top:739px;font-family:'Liberation Mono',monospace;font-size:12px;color:#45647e;-webkit-text-stroke:0.25px currentColor;transform:scaleX(0.8915);transform-origin:0 0">Asia</div>
<div class="a" style="left:295.7px;top:773px;font-family:'Liberation Mono',monospace;font-size:9.5px;color:#4d6780">19</div>
<div class="a" style="left:321.3px;top:771px;font-family:'Liberation Mono',monospace;font-size:12px;color:#4a6580;-webkit-text-stroke:0.25px currentColor;transform:scaleX(0.8940);transform-origin:0 0">2020-03-14</div>
<div class="a" style="left:439.2px;top:771px;font-family:'Liberation Mono',monospace;font-size:12px;color:#4a6580;-webkit-text-stroke:0.25px currentColor;transform:scaleX(0.9011);transform-origin:0 0">Afghanistan</div>
<div class="a" style="left:615px;top:768px;width:84px;height:18px;border-radius:7px;background:#d8eff7"></div>
<div class="a" style="left:622.2px;top:771px;font-family:'Liberation Mono',monospace;font-size:12px;color:#45647e;-webkit-text-stroke:0.25px currentColor;transform:scaleX(0.9011);transform-origin:0 0">Afghanistan</div>
<div class="a" style="left:838px;top:768px;width:38px;height:18px;border-radius:7px;background:#d8eff7"></div>
<div class="a" style="left:844.3px;top:771px;font-family:'Liberation Mono',monospace;font-size:12px;color:#45647e;-webkit-text-stroke:0.25px currentColor;transform:scaleX(0.8915);transform-origin:0 0">Asia</div>
<div class="a" style="left:295.7px;top:805px;font-family:'Liberation Mono',monospace;font-size:9.5px;color:#4d6780">20</div>
<div class="a" style="left:321.3px;top:803px;font-family:'Liberation Mono',monospace;font-size:12px;color:#4a6580;-webkit-text-stroke:0.25px currentColor;transform:scaleX(0.8940);transform-origin:0 0">2020-03-15</div>
<div class="a" style="left:439.2px;top:803px;font-family:'Liberation Mono',monospace;font-size:12px;color:#4a6580;-webkit-text-stroke:0.25px currentColor;transform:scaleX(0.9011);transform-origin:0 0">Afghanistan</div>
<div class="a" style="left:615px;top:800px;width:84px;height:18px;border-radius:7px;background:#d8eff7"></div>
<div class="a" style="left:622.2px;top:803px;font-family:'Liberation Mono',monospace;font-size:12px;color:#45647e;-webkit-text-stroke:0.25px currentColor;transform:scaleX(0.9011);transform-origin:0 0">Afghanistan</div>
<div class="a" style="left:838px;top:800px;width:38px;height:18px;border-radius:7px;background:#d8eff7"></div>
<div class="a" style="left:844.3px;top:803px;font-family:'Liberation Mono',monospace;font-size:12px;color:#45647e;-webkit-text-stroke:0.25px currentColor;transform:scaleX(0.8915);transform-origin:0 0">Asia</div>
<div class="a" style="left:957px;top:185px;width:2px;height:632px;background:#f3f4f5"></div>
<div class="a" style="left:959px;top:153px;width:100px;height:664px;background:#fff;border-left:1px solid #dfe1e3"></div>
<div class="a" style="left:974.2px;top:172px;font-size:18px;font-weight:bold;color:#464f5a;transform:scaleX(0.9329);transform-origin:0 0">About this dataset</div>
<div class="a" style="left:976px;top:210px;width:120px;height:34.5px;border:1.5px solid #4b8fcb;border-radius:3px"></div>
<svg class="a" style="left:992.5px;top:221.5px" width="15" height="13" viewBox="0 0 15 13"><path d="M6.5 2.7C3 2.7 1 4.3 1 6.5C1 8.6 2.8 10.2 5 10.2" fill="none" stroke="#3d8ccb" stroke-width="1.7"/><path d="M5.3 0.2L9 2.7L5.3 5.2Z" fill="#3d8ccb"/><path d="M8.5 2.8C11.2 2.8 13.6 4.3 13.6 6.5C13.6 8.6 11.6 10.2 9 10.2" fill="none" stroke="#3d8ccb" stroke-width="1.7"/><path d="M9.6 7.7L5.8 10.2L9.6 12.7Z" fill="#3d8ccb"/></svg>
<div class="a" style="left:974.2px;top:264px;font-size:12px;font-weight:bold;color:#8399ad;transform:scaleX(0.8279);transform-origin:0 0">SOURCE</div>
<div class="a" style="left:974.2px;top:298px;font-size:12px;font-weight:bold;color:#8399ad;transform:scaleX(0.8238);transform-origin:0 0">LAST SYNC</div>
<div class="a" style="left:974.2px;top:332px;font-size:12px;font-weight:bold;color:#8399ad;transform:scaleX(0.8979);transform-origin:0 0">OWNER</div>
<div class="a" style="left:974.2px;top:366px;font-size:12px;font-weight:bold;color:#8399ad;transform:scaleX(0.8443);transform-origin:0 0">CREATED</div>
<div class="a" style="left:974.2px;top:400px;font-size:12px;font-weight:bold;color:#8399ad;transform:scaleX(0.8175);transform-origin:0 0">SIZE</div>
<div class="a" style="left:974.2px;top:434px;font-size:12px;font-weight:bold;color:#8399ad;transform:scaleX(0.8729);transform-origin:0 0">INSPECTIONS</div>
<div class="a" style="left:974.2px;top:468px;font-size:12px;font-weight:bold;color:#8399ad;transform:scaleX(0.7917);transform-origin:0 0">LABELS</div>
<div class="a" style="left:974.2px;top:502px;font-size:12px;font-weight:bold;color:#8399ad;transform:scaleX(0.8852);transform-origin:0 0">DESCRIPTION</div>
<div class="a" style="left:960px;top:533px;width:99px;height:1px;background:#e1e4e7"></div>
<div class="a" style="left:973.2px;top:550px;font-size:13px;color:#6b8298;transform:scaleX(0.9629);transform-origin:0 0">Displaying 8 columns</div>
<div class="a" style="left:974.2px;top:569px;font-size:18px;font-weight:bold;color:#464f5a;transform:scaleX(0.9160);transform-origin:0 0">full_data</div>
<div class="a" style="left:960px;top:604px;width:99px;height:1px;background:#e1e4e7"></div>
<svg class="a" style="left:974.2px;top:624.6px" width="15.8" height="15.8" viewBox="0 0 14 14"><rect x="0.7" y="1.4" width="12.6" height="11.9" rx="1" fill="none" stroke="#2c3a4a" stroke-width="1.35"/><path d="M0.8 5.0h12.4" stroke="#2c3a4a" stroke-width="1.2"/><ellipse cx="3.4" cy="1.6" rx="0.95" ry="1.5" fill="#2c3a4a"/><ellipse cx="10.6" cy="1.6" rx="0.95" ry="1.5" fill="#2c3a4a"/></svg>
<div class="a" style="left:998.5px;top:624px;font-size:14px;font-weight:bold;color:#2c3a4a;transform:scaleX(0.9448);transform-origin:0 0">date</div>
<svg class="a" style="left:1030px;top:624.5px" width="16" height="16" viewBox="0 0 16 16"><circle cx="8" cy="8" r="7.2" fill="none" stroke="#3d8ccb" stroke-width="1.4"/><circle cx="8" cy="4.6" r="0.9" fill="#3d8ccb"/><path d="M6.3 6.8h2.2v4.6M6.3 11.6h3.6" fill="none" stroke="#3d8ccb" stroke-width="1.3"/></svg>
<svg class="a" style="left:974.4px;top:668px" width="15.3" height="15.3" viewBox="0 0 14 14"><rect x="0.7" y="0.7" width="12.6" height="12.6" rx="1.2" fill="none" stroke="#2c3a4a" stroke-width="1.35"/><path d="M3.3 4.9V3.6H10.7V4.9" fill="none" stroke="#2c3a4a" stroke-width="1.2"/><path d="M7 3.6V10.4" stroke="#2c3a4a" stroke-width="1.3"/><path d="M5.3 10.6H8.7" stroke="#2c3a4a" stroke-width="1.2"/></svg>
<div class="a" style="left:998.3px;top:668px;font-size:14px;font-weight:bold;color:#2c3a4a;transform:scaleX(0.9357);transform-origin:0 0">location</div>
<svg class="a" style="left:1052.7px;top:667.8px" width="16" height="16" viewBox="0 0 16 16"><circle cx="8" cy="8" r="7.2" fill="none" stroke="#3d8ccb" stroke-width="1.4"/><circle cx="8" cy="4.6" r="0.9" fill="#3d8ccb"/><path d="M6.3 6.8h2.2v4.6M6.3 11.6h3.6" fill="none" stroke="#3d8ccb" stroke-width="1.3"/></svg>
<svg class="a" style="left:974.9px;top:709.7px" width="14.5" height="14.5" viewBox="0 0 14.5 14.5"><circle cx="7.25" cy="7.25" r="6.6" fill="none" stroke="#2c3a4a" stroke-width="1.15"/><path d="M5.2 1.0C5.4 2.6 5.2 3.6 4.0 4.8C2.6 6 1.9 7 2.3 8.2C2.8 9.4 3.8 10 3.9 11.6C3.9 12.4 4.4 13 4.8 13.3M6.6 0.8C7 2.6 8 3.4 9.5 3.4C10.5 3.4 11.2 3.1 11.9 2.4M7.2 6C7 8 7 10 7.4 11.7C9.5 11.6 11.8 10 12 7.8C12 6.4 11 5.4 9.6 5.4C8.6 5.4 7.8 5.6 7.2 6Z" fill="none" stroke="#2c3a4a" stroke-width="1.09" stroke-linejoin="round"/></svg>
<div class="a" style="left:998.3px;top:710px;font-size:14px;font-weight:bold;color:#2c3a4a;transform:scaleX(0.9311);transform-origin:0 0">country</div>
<svg class="a" style="left:1050.6px;top:710.5px" width="16" height="16" viewBox="0 0 16 16"><circle cx="8" cy="8" r="7.2" fill="none" stroke="#3d8ccb" stroke-width="1.4"/><circle cx="8" cy="4.6" r="0.9" fill="#3d8ccb"/><path d="M6.3 6.8h2.2v4.6M6.3 11.6h3.6" fill="none" stroke="#3d8ccb" stroke-width="1.3"/></svg>
<svg class="a" style="left:974.9px;top:752.2px" width="14.5" height="14.5" viewBox="0 0 14.5 14.5"><circle cx="7.25" cy="7.25" r="6.6" fill="none" stroke="#2c3a4a" stroke-width="1.15"/><path d="M5.2 1.0C5.4 2.6 5.2 3.6 4.0 4.8C2.6 6 1.9 7 2.3 8.2C2.8 9.4 3.8 10 3.9 11.6C3.9 12.4 4.4 13 4.8 13.3M6.6 0.8C7 2.6 8 3.4 9.5 3.4C10.5 3.4 11.2 3.1 11.9 2.4M7.2 6C7 8 7 10 7.4 11.7C9.5 11.6 11.8 10 12 7.8C12 6.4 11 5.4 9.6 5.4C8.6 5.4 7.8 5.6 7.2 6Z" fill="none" stroke="#2c3a4a" stroke-width="1.09" stroke-linejoin="round"/></svg>
<div class="a" style="left:998.3px;top:754px;font-size:14px;font-weight:bold;color:#2c3a4a;transform:scaleX(0.8796);transform-origin:0 0">landmass</div>
<svg class="a" style="left:974px;top:799px" width="17" height="13" viewBox="0 0 17 13"><path d="M6.5 0.5L3.5 12.5M13 0.5L10 12.5M1 4.3h15M0.2 8.8h15" stroke="#2c3a4a" stroke-width="1.4"/></svg>
<div class="a" style="left:998.3px;top:796px;font-size:14px;font-weight:bold;color:#2c3a4a;transform:scaleX(0.8796);transform-origin:0 0">new_cases</div>
</body></html>
